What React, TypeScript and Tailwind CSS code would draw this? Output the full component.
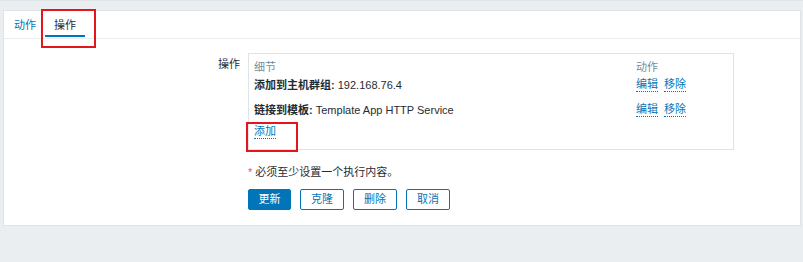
import React from 'react';

const FONT = { fontFamily: '"Liberation Sans", Arial, "Noto Sans CJK SC", sans-serif' };

const operations = [
  { label: '添加到主机群组:', value: '192.168.76.4' },
  { label: '链接到模板:', value: 'Template App HTTP Service' },
];

function LinkText({ children }: { children: React.ReactNode }) {
  return (
    <span className="cursor-pointer border-b border-dotted border-[#0275b8] leading-[13px] text-[#0275b8]">
      {children}
    </span>
  );
}

export default function App() {
  return (
    <div
      className="relative h-[262px] w-[803px] overflow-hidden border-t border-[#dfe4e7] bg-[#ebeef0] pl-[3px] pr-[2px] pt-[9px] text-[11px] text-[#1f2c33]"
      style={FONT}
    >
      <div className="h-[216px] border border-[#dfe4e7] bg-white">
        {/* 标签页 */}
        <div className="flex h-[28px] items-stretch border-b border-[#ebeef0] pl-[1px]">
          <div className="flex items-center px-[9px] pt-[1px] text-[#0275b8]">动作</div>
          <div className="relative flex items-center px-[9px] pt-[1px]">
            操作
            <span className="absolute bottom-[1px] left-0 right-0 h-[2px] bg-[#0275b8]" />
          </div>
        </div>

        {/* 表单 */}
        <div className="grid grid-cols-[236px_486px] gap-x-[8px] pt-[14px]">
          <div className="pt-[3px] text-right">操作</div>
          <div className="flex flex-col border border-[#dfe4e7] pb-[8px] pl-[5px] pt-[4px]">
            <div className="grid h-[18px] grid-cols-[1fr_97px] items-center text-[#768d99]">
              <span>细节</span>
              <span>动作</span>
            </div>
            {operations.map((op, i) => (
              <div
                key={op.label}
                className={`grid h-[18px] grid-cols-[1fr_97px] items-center ${i > 0 ? 'mt-[7px]' : ''}`}
              >
                <span>
                  <b>{op.label}</b> {op.value}
                </span>
                <span className="flex gap-[6px]">
                  <LinkText>编辑</LinkText>
                  <LinkText>移除</LinkText>
                </span>
              </div>
            ))}
            <div className="mt-[4px] flex h-[18px] items-center">
              <LinkText>添加</LinkText>
            </div>
          </div>

          <div />
          <div className="mt-[14px]">
            <span className="text-[#e45959]">*</span> 必须至少设置一个执行内容。
          </div>

          <div />
          <div className="mt-[8px] flex gap-[9px]">
            <button className="h-[21px] w-[43px] rounded-[2px] border border-[#0275b8] bg-[#0275b8] text-white">
              更新
            </button>
            {['克隆', '删除', '取消'].map((t) => (
              <button
                key={t}
                className="h-[21px] w-[44px] rounded-[2px] border border-[#0275b8] bg-white text-[#0275b8]"
              >
                {t}
              </button>
            ))}
          </div>
        </div>
      </div>

      {/* 标注框 */}
      <div className="pointer-events-none absolute left-[41px] top-[8px] h-[39px] w-[55px] border-2 border-[#e3161e]" />
      <div className="pointer-events-none absolute left-[246px] top-[121px] h-[30px] w-[52px] border-2 border-[#e3161e]" />
    </div>
  );
}
